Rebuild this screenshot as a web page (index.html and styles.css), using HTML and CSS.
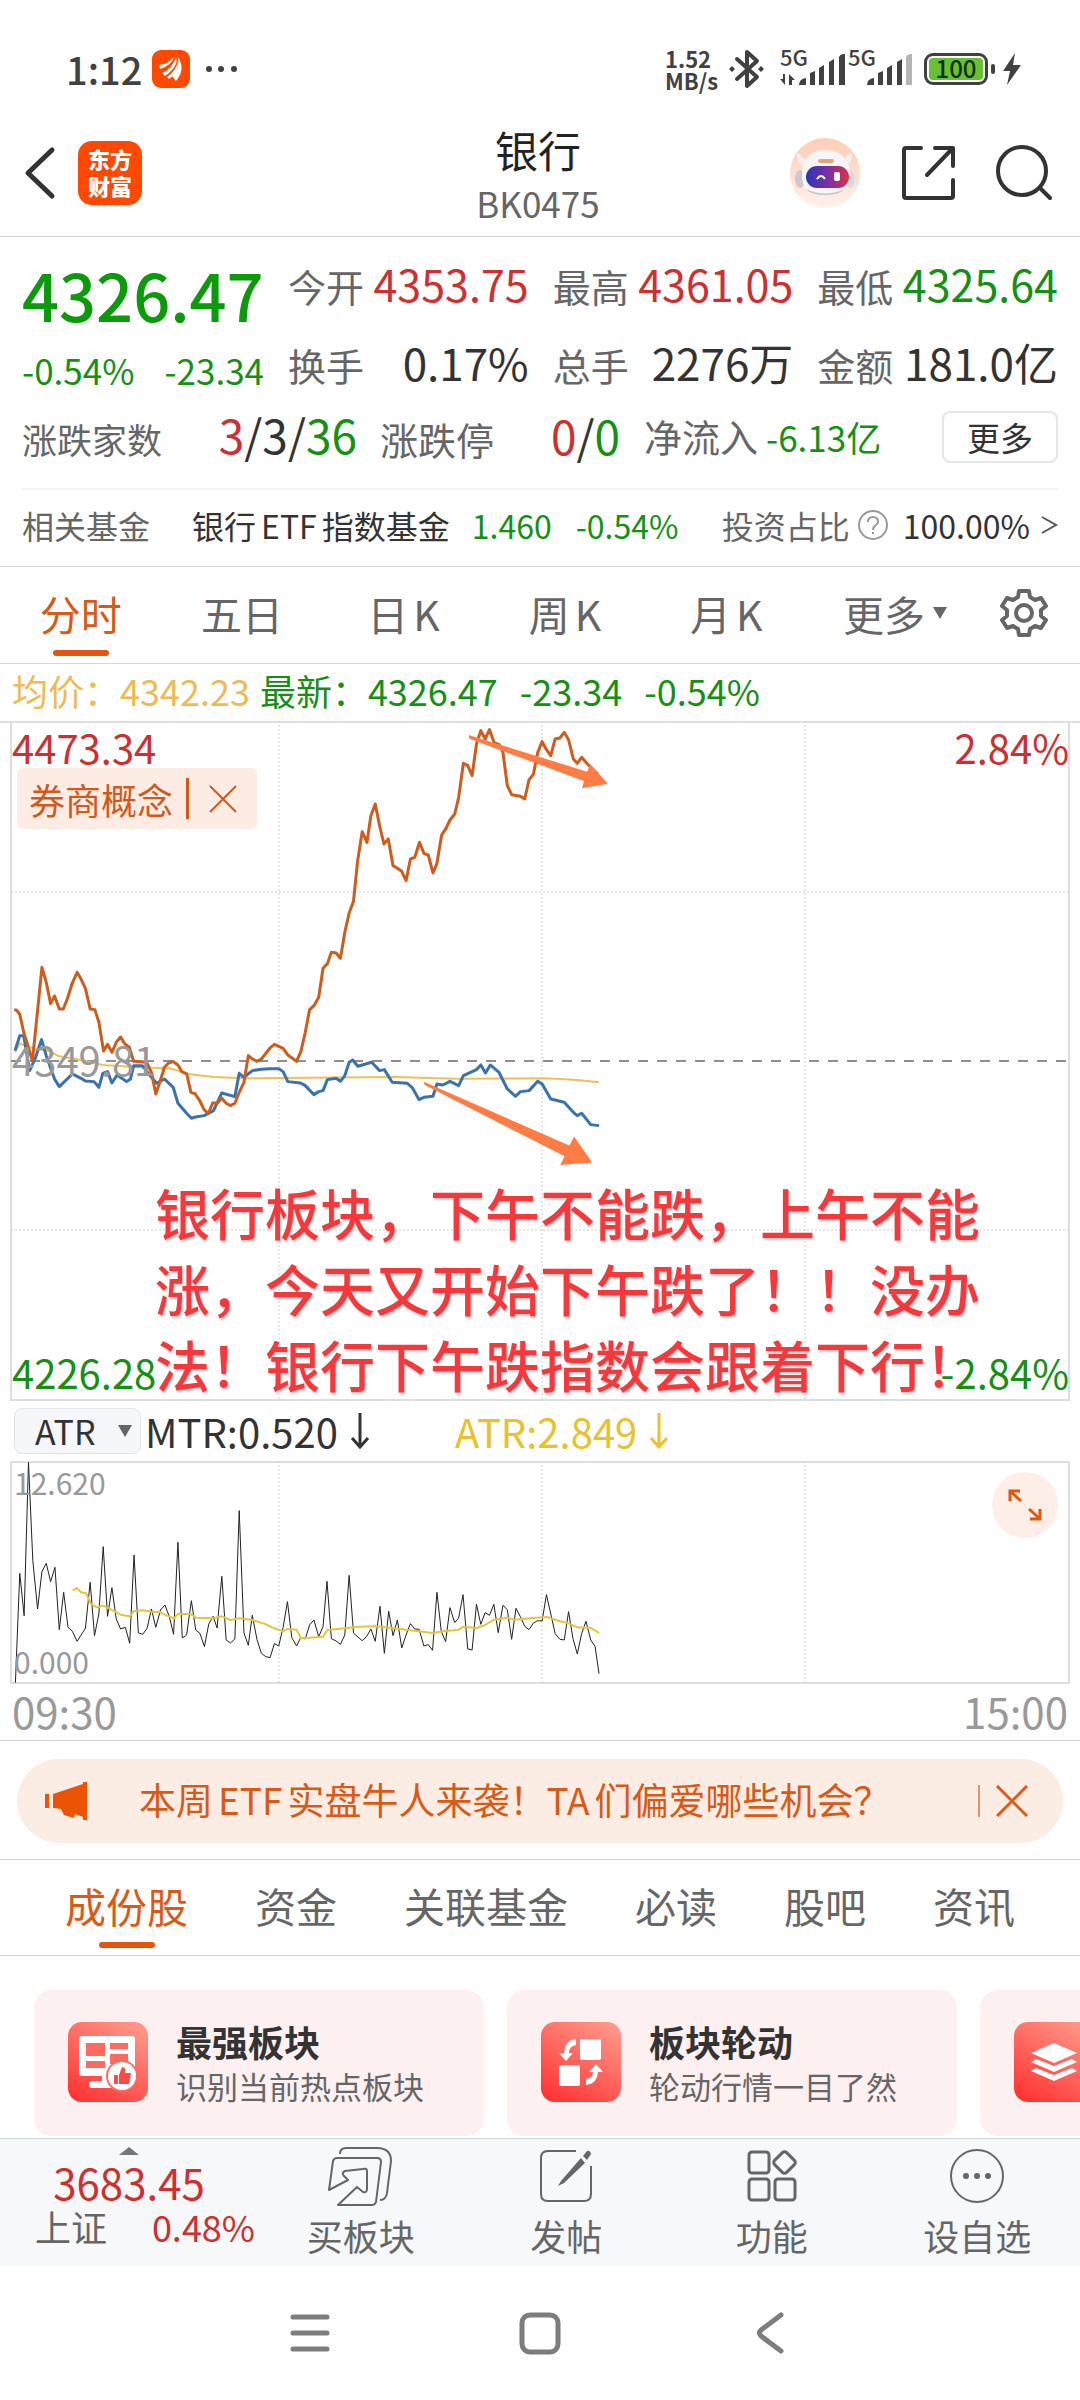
FILE: index.html
```html
<!DOCTYPE html>
<html lang="zh-CN">
<head>
<meta charset="utf-8">
<meta name="viewport" content="width=device-width, initial-scale=1">
<title>银行 BK0475</title>
<link rel="stylesheet" href="styles.css">
</head>
<body>
<div class="statusbar">
  <span class="clock">1:12</span>
  <svg class="notif" width="38" height="38" viewBox="0 0 38 38"><rect width="38" height="38" rx="9" fill="#ff4800"/><path d="M7 15q9-1 15-8-2 8-14 12zM10 23q10-4 14-16 3 9-11 19zM20 26q8-8 6-19 8 12-2 24zM15 27q9-6 11-16 0 12-9 18z" fill="#fff"/></svg>
  <svg width="34" height="10" viewBox="0 0 34 10" fill="#414141"><circle cx="5" cy="5" r="3"/><circle cx="17" cy="5" r="3"/><circle cx="30" cy="5" r="3"/></svg>
  <span class="spacer"></span>
  <span class="speed">1.52<br>MB/s</span>
  <svg class="bt" width="38" height="40" viewBox="0 0 38 40" fill="none" stroke="#414141" stroke-width="4" stroke-linejoin="round" stroke-linecap="round"><path d="M9 10l20 18-10 9V3l10 9L9 30"/><path d="M4 17l3 3-3 3-3-3zM33 17l3 3-3 3-3-3z" fill="#414141" stroke="none"/></svg>
  <span class="sim"><span class="net">5G</span>
    <svg width="66" height="32" viewBox="0 0 66 32" fill="#414141"><path d="M5 20v11l-5-6h3v-5zM9 31V20l6 6h-3v5zM19 31q0-6 7-7v7zM30 19l5-2v14h-5zM39 14l5-3v20h-5zM49 8l5-3v26h-5zM59 4q0-4 6-4v31h-6z"/></svg></span>
  <span class="sim"><span class="net">5G</span>
    <svg width="66" height="32" viewBox="0 0 66 32" fill="#414141"><path d="M19 31q0-6 7-7v7zM30 19l5-2v14h-5zM39 14l5-3v20h-5zM49 8l5-3v26h-5z"/><path d="M58 4q0-4 6-4v31h-6z" fill="#b5b5b5"/></svg></span>
  <span class="battery"><span class="cell">100</span></span>
  <svg width="20" height="32" viewBox="0 0 20 32" fill="#414141"><path d="M13 0L1 18h7L5 32l14-20h-8z"/></svg>
</div>

<header class="appbar">
  <div class="side">
    <button class="icon" aria-label="返回"><svg width="32" height="54" viewBox="0 0 32 54" fill="none" stroke="#333" stroke-width="5" stroke-linecap="round" stroke-linejoin="round"><path d="M28 4L4 27l24 23"/></svg></button>
    <a class="brand" href="#">东方<br>财富</a>
  </div>
  <div class="heading"><h1>银行</h1><p>BK0475</p></div>
  <div class="side tools">
    <button class="icon" aria-label="助手"><svg width="70" height="70" viewBox="0 0 70 70"><defs><linearGradient id="halo" x2="0" y2="1"><stop stop-color="#fdcdb5"/><stop offset="1" stop-color="#fff1ea"/></linearGradient><linearGradient id="visor"><stop stop-color="#2b35b5"/><stop offset=".5" stop-color="#7a2fa6"/><stop offset="1" stop-color="#dc3140"/></linearGradient></defs><circle cx="35" cy="35" r="35" fill="url(#halo)"/><path d="M10 16q-4-2-3 3 1 8 8 9l4-6q-7 0-9-6zM58 16q5-2 4 3-2 8-8 9l-5-6q7 0 9-6z" fill="#f4eff0"/><ellipse cx="10" cy="41" rx="5" ry="9" fill="#cfc9cf"/><ellipse cx="60" cy="41" rx="5" ry="9" fill="#ddd8dc"/><path d="M35 12c17 0 25 11 25 25 0 13-8 20-25 20S12 50 12 37c0-14 7-25 23-25z" fill="#f7f5f7"/><path d="M16 51q19 9 39 0-6 6-20 6t-19-6z" fill="#c7c4ca"/><rect x="28" y="21" width="16" height="4" rx="2" fill="#e0a878"/><rect x="16" y="28" width="43" height="22" rx="11" fill="url(#visor)"/><path d="M27 41q4-6 8 0" fill="none" stroke="#fff" stroke-width="2"/><rect x="44" y="34" width="6" height="9" rx="2" fill="#fff"/></svg></button>
    <button class="icon" aria-label="分享"><svg width="54" height="56" viewBox="0 0 54 56" fill="none" stroke="#333" stroke-width="4" stroke-linecap="round" stroke-linejoin="round"><path d="M20 3H5q-2 0-2 2v46q0 2 2 2h45q2 0 2-2V35M34 3h18v18M51 4L26 30"/></svg></button>
    <button class="icon" aria-label="搜索"><svg width="56" height="56" viewBox="0 0 56 56" fill="none" stroke="#333" stroke-width="4" stroke-linecap="round"><circle cx="26" cy="26" r="24"/><path d="M44 43l10 10"/></svg></button>
  </div>
</header>

<section class="quote">
  <div class="stats">
    <div class="price down"><strong>4326.47</strong><p><span>-0.54%</span><span>-23.34</span></p></div>
    <dl class="figures">
      <div><dt>今开</dt><dd class="up">4353.75</dd></div>
      <div><dt>最高</dt><dd class="up">4361.05</dd></div>
      <div><dt>最低</dt><dd class="down">4325.64</dd></div>
      <div class="big"><dt>换手</dt><dd>0.17%</dd></div>
      <div class="big"><dt>总手</dt><dd>2276万</dd></div>
      <div class="big"><dt>金额</dt><dd>181.0亿</dd></div>
    </dl>
  </div>
  <div class="breadth">
    <div class="pair wide"><span class="small">涨跌家数</span><b><i class="up">3</i>/3/<i class="down">36</i></b></div>
    <div class="pair mid"><span>涨跌停</span><b><i class="up">0</i>/<i class="down">0</i></b></div>
    <div class="flow"><span>净流入</span><em class="down">-6.13亿</em></div>
    <button class="more">更多</button>
  </div>
  <a class="fund" href="#">
    <span class="muted">相关基金</span><span class="name">银行<span class="latin">ETF</span>指数基金</span><span class="down">1.460</span><span class="down chg">-0.54%</span>
    <span class="muted ratio">投资占比</span>
    <svg width="32" height="32" viewBox="0 0 32 32" fill="none" stroke="#999" stroke-width="2"><circle cx="16" cy="16" r="14"/><path d="M11 13q0-5 5-5t5 5q0 2-3 4-2 1-2 4M16 23v2"/></svg>
    <span class="pct">100.00%</span>
    <svg width="18" height="20" viewBox="0 0 18 20" fill="none" stroke="#555" stroke-width="2"><path d="M2 2l14 8-14 8"/></svg>
  </a>
</section>

<nav class="periods">
  <button class="on">分时</button><button>五日</button><button>日<span class="latin">K</span></button><button>周<span class="latin">K</span></button><button>月<span class="latin">K</span></button>
  <button class="drop">更多<svg width="14" height="12" viewBox="0 0 14 12" fill="#666"><path d="M0 0h14L7 12z"/></svg></button>
  <button class="icon" aria-label="设置"><svg width="48" height="50" viewBox="0 0 48 50" fill="none" stroke="#666" stroke-width="4" stroke-linejoin="round"><path d="M19 3h10l1 6 5 3 6-2 5 8-5 4v6l5 4-5 8-6-2-5 3-1 6H19l-1-6-5-3-6 2-5-8 5-4v-6l-5-4 5-8 6 2 5-3z"/><circle cx="24" cy="25" r="8"/></svg></button>
</nav>

<p class="ticker"><span class="avg">均价：4342.23</span><span class="down">最新：4326.47</span><span class="down">-23.34</span><span class="down">-0.54%</span></p>

<section class="chart main">
  <svg viewBox="0 0 1080 680">
    <g fill="none" stroke="#dedede" stroke-width="2"><path d="M0 1h1080"/><path d="M11 0v679h1058V0"/><path d="M279 0v679M542 0v679M805 0v679M11 171h1058M11 509h1058" stroke="#cfcfcf" stroke-width="1" stroke-dasharray="2 2"/></g>
    <path d="M11 340h1058" stroke="#8f8f8f" stroke-width="2" stroke-dasharray="10 9"/>
    <g class="plot" transform="matrix(.3954 0 0 .3333 0 -22)">
      <polyline class="average" points="38,1060 50,1033 62,1040 90,1050 120,1055 150,1072 205,1083 260,1098 350,1105 430,1108 480,1126 540,1134 620,1138 780,1136 1000,1134 1150,1139 1380,1138 1460,1143 1515,1150"/>
      <polyline stroke="#3a72ae" points="38,1055 50,1010 60,1010 75,1115 90,1075 105,1022 117,1070 138,1140 150,1163 183,1125 205,1138 216,1146 238,1148 250,1165 260,1123 272,1118 283,1152 296,1128 320,1148 330,1140 338,1100 360,1100 383,1135 396,1153 416,1140 438,1165 450,1213 472,1243 484,1258 494,1254 516,1250 540,1235 561,1182 594,1193 605,1123 617,1135 638,1115 661,1111 683,1109 705,1109 716,1118 728,1148 760,1152 772,1160 794,1187 806,1178 817,1175 828,1142 850,1138 861,1147 872,1130 883,1090 892,1083 905,1102 940,1090 960,1115 972,1112 992,1150 1030,1153 1042,1165 1060,1202 1072,1195 1095,1192 1105,1155 1120,1158 1138,1147 1160,1160 1172,1130 1205,1112 1216,1098 1228,1122 1240,1098 1262,1120 1283,1170 1304,1192 1316,1178 1338,1175 1360,1147 1371,1155 1393,1200 1427,1210 1450,1240 1460,1250 1471,1243 1494,1277 1515,1280"/>
      <polyline stroke="#ce5c1c" points="36,932 42,934 50,946 60,1000 82,1085 95,935 106,805 117,850 128,914 138,891 150,930 160,930 170,900 182,855 195,820 204,838 216,868 228,930 240,932 250,970 262,1056 272,1036 283,1060 294,1030 305,1014 316,1035 327,1045 338,1087 360,1088 372,1093 383,1120 394,1185 404,1150 416,1105 426,1092 438,1088 450,1098 460,1118 472,1125 483,1180 494,1185 505,1205 516,1232 527,1243 538,1212 550,1212 561,1198 572,1213 583,1220 594,1213 605,1180 617,1150 628,1070 638,1080 650,1087 661,1080 683,1047 694,1036 716,1048 728,1068 750,1087 761,1057 772,1000 783,932 794,920 806,895 817,808 828,794 838,760 850,762 861,778 872,700 883,642 894,607 904,490 916,398 928,430 938,350 949,315 960,380 971,435 982,420 994,500 1005,508 1016,517 1027,545 1038,480 1049,475 1061,430 1072,463 1083,468 1095,522 1105,493 1117,408 1128,388 1138,363 1150,345 1160,295 1172,193 1183,200 1194,230 1205,135 1216,95 1227,120 1238,92 1250,132 1262,136 1272,160 1283,260 1294,287 1316,292 1327,300 1338,242 1349,226 1360,160 1371,128 1382,152 1393,170 1404,120 1416,117 1427,100 1438,122 1450,180 1460,193 1471,175 1482,190 1494,205 1512,225"/>
      <path fill="#ff7d45" d="M1185 108L1485 218 1493 196 1537 254 1472 268 1477 246 1187 119zM1072 1148L1440 1340 1452 1313 1498 1391 1417 1398 1428 1372 1074 1158z"/>
    </g>
  </svg>
  <span class="tag hi up">4473.34</span><span class="tag hi right up">2.84%</span>
  <span class="tag midline">4349.81</span>
  <span class="tag lo down">4226.28</span><span class="tag lo right down">-2.84%</span>
  <div class="compare"><span>券商概念</span><button aria-label="移除券商概念"><svg width="28" height="28" viewBox="0 0 28 28" stroke="#d05a1c" stroke-width="2"><path d="M1 1l26 26M27 1L1 27"/></svg></button></div>
  <p class="note">银行板块，下午不能跌，上午不能<br>涨，今天又开始下午跌了！！没办<br>法！银行下午跌指数会跟着下行！</p>
</section>

<div class="indicator">
  <label class="picker"><select aria-label="指标"><option>ATR</option></select><svg width="14" height="12" viewBox="0 0 14 12" fill="#666"><path d="M0 0h14L7 12z"/></svg></label>
  <span class="mtr">MTR:0.520<svg width="20" height="36" viewBox="0 0 20 36" fill="none" stroke="currentColor" stroke-width="3"><path d="M10 0v33M2 25l8 9 8-9"/></svg></span>
  <span class="atr">ATR:2.849<svg width="20" height="36" viewBox="0 0 20 36" fill="none" stroke="currentColor" stroke-width="3"><path d="M10 0v33M2 25l8 9 8-9"/></svg></span>
</div>

<section class="chart sub">
  <svg viewBox="0 0 1080 224">
    <g fill="none" stroke="#dedede" stroke-width="2"><path d="M11 1h1058v221H11z"/><path d="M279 0v222M542 0v222M805 0v222" stroke="#cfcfcf" stroke-width="1" stroke-dasharray="2 2"/></g>
    <g class="plot thin" transform="matrix(.3954 0 0 .3333 0 -82)">
      <polyline stroke="#222" points="39,911 50,583 61,710 72,250 83,545 95,690 106,578 117,553 128,608 139,565 150,752 161,640 172,745 183,757 195,787 216,748 228,610 239,770 250,705 261,503 272,712 283,626 294,720 305,750 317,745 328,793 339,528 350,762 361,766 372,748 383,690 394,745 406,693 417,678 428,712 439,766 450,490 461,777 472,768 484,665 495,753 506,764 517,803 528,735 539,712 549,747 561,592 572,783 583,792 594,780 605,395 617,762 628,799 638,709 650,782 661,823 672,833 683,836 694,794 705,801 716,745 727,668 738,776 750,801 761,775 772,780 783,738 794,723 806,773 817,743 827,607 838,779 850,786 861,796 872,768 883,589 894,762 905,774 916,785 927,773 938,750 949,787 961,682 972,823 983,697 994,770 1005,723 1016,807 1027,768 1038,734 1049,750 1060,751 1072,801 1083,797 1094,814 1105,640 1116,757 1127,788 1138,686 1150,731 1160,717 1171,647 1183,810 1194,813 1205,676 1216,736 1227,701 1238,709 1249,676 1260,761 1272,679 1283,692 1294,781 1305,688 1316,713 1327,742 1338,752 1349,732 1360,725 1371,726 1382,647 1393,705 1404,764 1416,781 1427,783 1438,698 1449,778 1460,825 1471,764 1482,727 1494,783 1505,802 1515,884"/>
      <polyline class="average" points="184,635 194,627 205,640 218,643 230,675 245,685 261,680 283,693 305,707 328,712 338,697 360,694 383,698 406,700 428,713 440,718 450,705 483,705 495,716 540,718 561,712 583,723 605,718 638,723 670,735 694,748 716,757 727,750 750,752 761,777 783,776 817,773 828,753 861,749 905,743 950,742 1000,748 1030,753 1060,757 1094,762 1127,756 1160,752 1171,743 1205,747 1227,738 1250,722 1283,716 1300,722 1340,718 1383,714 1416,727 1438,733 1460,745 1494,747 1515,762"/>
    </g>
  </svg>
  <span class="scale top">12.620</span><span class="scale bottom">0.000</span>
  <button class="expand" aria-label="全屏"><svg width="36" height="34" viewBox="0 0 36 34" fill="none" stroke="#e2560f" stroke-width="3"><path d="M3 13V3h10M3 3l11 10M33 21v10H23M33 31L22 21"/></svg></button>
</section>
<div class="times"><span>09:30</span><span>15:00</span></div>

<aside class="promo">
  <svg width="44" height="38" viewBox="0 0 44 38" fill="#ea5404"><path d="M0 12h4v14H0zM8 12L38 2V0h4v38h-4v-3l-8-3-1 4-10-3-3-6-8-1z"/></svg>
  <a href="#">本周<span class="latin">ETF</span>实盘牛人来袭！<span class="latin first">TA</span>们偏爱哪些机会？</a>
  <button class="icon" aria-label="关闭"><svg width="32" height="32" viewBox="0 0 32 32" stroke="#dd5a18" stroke-width="3"><path d="M1 1l30 30M31 1L1 31"/></svg></button>
</aside>

<nav class="sections"><button class="on">成份股</button><button>资金</button><button>关联基金</button><button>必读</button><button>股吧</button><button>资讯</button></nav>

<section class="cards">
  <a class="card" href="#"><svg width="80" height="80" viewBox="0 0 80 80"><defs><linearGradient id="red" x1=".2" y1="1" x2=".8" y2="0"><stop stop-color="#ff3535"/><stop offset="1" stop-color="#ff9788"/></linearGradient></defs><rect width="80" height="80" rx="14" fill="url(#red)"/><rect x="11" y="14" width="56" height="40" rx="3" fill="#fff"/><path d="M18 21h19v13H18zM42 21h18v6H42zM42 32h18v10H42zM18 39h19v7H18z" fill="#ff6a60"/><path d="M34 54h8v6h-8z" fill="#fff"/><rect x="21" y="59" width="36" height="7" rx="3" fill="#fff"/><circle cx="54" cy="54" r="16" fill="#ff6a60"/><circle cx="54" cy="54" r="14" fill="#fff"/><path d="M46 53h4v9h-4zM51 53l3-8q4 0 3 6h6l-2 11H51z" fill="#ff4b45"/></svg><span><strong>最强板块</strong><small>识别当前热点板块</small></span></a>
  <a class="card" href="#"><svg width="80" height="80" viewBox="0 0 80 80"><rect width="80" height="80" rx="14" fill="url(#red)"/><rect x="39" y="17" width="21" height="21" rx="2" fill="#fff"/><rect x="18" y="43" width="21" height="21" rx="2" fill="#fff"/><path d="M35 17v6q-7 1-7 8h4l-7 8-7-8h5q1-13 12-14zM45 63v-6q7-1 7-7h-4l7-8 7 8h-5q-1 12-12 13z" fill="#fff"/></svg><span><strong>板块轮动</strong><small>轮动行情一目了然</small></span></a>
  <a class="card" href="#" aria-label="更多板块工具"><svg width="80" height="80" viewBox="0 0 80 80"><rect width="80" height="80" rx="14" fill="url(#red)"/><path d="M40 21l23 10-23 10-23-10z" fill="#fff"/><path d="M17 40l5-3 18 7 18-7 5 3-23 10zM17 49l5-3 18 7 18-7 5 3-23 10z" fill="#fff"/></svg></a>
</section>

<footer class="dock">
  <a class="index up" href="#">
    <svg width="20" height="8" viewBox="0 0 20 8" fill="#777"><path d="M0 8L10 0l10 8z"/></svg>
    <b>3683.45</b><span class="pairline"><i>上证</i><em>0.48%</em></span>
  </a>
  <a href="#"><svg width="66" height="62" viewBox="0 0 66 62" fill="none" stroke="#666" stroke-width="2" stroke-linejoin="round"><path d="M12 9q0-6 6-6h31q14 0 14 13l-4 32q-1 7-7 7"/><path d="M1 45l4-29q1-3 4-3h40q4 0 4 4l-5 40q-1 3-4 3H10l19-18 6 5q4 1 4-3V26q0-3-4-2l-18 2q-4 2-1 5l4 4z"/></svg>买板块</a>
  <a href="#"><svg width="56" height="62" viewBox="0 0 56 62" fill="none" stroke="#666" stroke-width="2"><path d="M38 6H10q-7 0-7 7v36q0 7 7 7h36q7 0 7-7V21"/><path d="M23 36L43 13l4 5-21 20-6 3zM45 11l4-5q3-1 4 3l-4 6z" fill="#666" stroke="none"/></svg>发帖</a>
  <a href="#"><svg width="52" height="62" viewBox="0 0 52 62" fill="none" stroke="#666" stroke-width="3"><rect x="3" y="7" width="20" height="21" rx="3"/><rect x="3" y="34" width="20" height="21" rx="3"/><rect x="29" y="34" width="20" height="21" rx="3"/><rect x="30" y="9" width="17" height="17" rx="3" transform="rotate(45 38.500 17.500)"/></svg>功能</a>
  <a href="#"><svg width="56" height="62" viewBox="0 0 56 62" fill="none" stroke="#666" stroke-width="2"><circle cx="28" cy="31" r="26"/><g fill="#666" stroke="none"><circle cx="17" cy="31" r="3"/><circle cx="28" cy="31" r="3"/><circle cx="39" cy="31" r="3"/></g></svg>设自选</a>
</footer>

<nav class="system">
  <button class="icon" aria-label="菜单"><svg width="42" height="44" viewBox="0 0 42 44" stroke="#7d7d7d" stroke-width="5" stroke-linecap="round"><path d="M4 6h34M4 22h34M4 38h34"/></svg></button>
  <button class="icon" aria-label="主页"><svg width="42" height="44" viewBox="0 0 42 44" fill="none" stroke="#7d7d7d" stroke-width="5"><rect x="3" y="4" width="36" height="37" rx="8"/></svg></button>
  <button class="icon" aria-label="后退"><svg width="42" height="44" viewBox="0 0 42 44" fill="none" stroke="#7d7d7d" stroke-width="5" stroke-linecap="round" stroke-linejoin="round"><path d="M32 4L12 19q-3 3 0 6l20 15"/></svg></button>
</nav>
</body>
</html>
```
FILE: styles.css
```css
* { box-sizing: border-box; }
body, h1, p, dl, dd { margin: 0; }
body {
  background: #fff;
  color: #333;
  font-family: "Noto Sans CJK SC", "Noto Sans", sans-serif;
  font-size: 36px;
}
svg { display: block; flex: none; }
a { color: inherit; text-decoration: none; }
i, em { font-style: normal; }
button, select { font: inherit; color: inherit; background: none; border: 0; padding: 0; }
.icon { display: flex; }
.up { color: #cc3030; }
.down { color: #159015; }
.latin { margin: 0 5px; }
.latin.first { margin-left: 0; }

/* phone status bar */
.statusbar { display: flex; align-items: center; height: 102px; padding: 36px 58px 0 66px; color: #414141; }
.clock { width: 86px; font-size: 38px; line-height: 60px; font-weight: 500; }
.notif { margin-right: 14px; }
.spacer { flex: 1; }
.speed { font-size: 22px; line-height: 22px; font-weight: 700; width: 63px; }
.bt { margin-right: 14px; }
.sim { position: relative; display: flex; width: 68px; padding-top: 2px; }
.net { position: absolute; left: 0; top: -8px; font-size: 22px; line-height: 24px; font-weight: 500; }
.battery { display: flex; position: relative; width: 64px; height: 32px; border: 3px solid #414141; border-radius: 9px; padding: 2px; margin: 0 14px 0 8px; }
.battery::after { content: ""; position: absolute; right: -10px; top: 8px; width: 4px; height: 10px; border-radius: 2px; background: #414141; }
.cell { flex: 1; background: #67c132; border-radius: 4px; color: #12300a; font-size: 24px; line-height: 20px; text-align: center; font-weight: 500; }

/* title bar */
.appbar { display: grid; grid-template-columns: 1fr auto 1fr; align-items: center; height: 135px; padding: 8px 28px 0 24px; border-bottom: 1px solid #d6d6d6; }
.side { display: flex; align-items: center; gap: 22px; }
.tools { justify-content: flex-end; gap: 41px; }
.brand { width: 64px; height: 64px; border-radius: 14px; background: #ff4800; color: #fff; font-size: 22px; line-height: 27px; font-weight: 900; text-align: center; padding-top: 4px; }
.heading { text-align: center; }
h1 { font-size: 43px; line-height: 60px; font-weight: 400; color: #222; }
.heading p { font-size: 35px; line-height: 48px; color: #666; }

/* quote */
.quote { border-bottom: 1px solid #d6d6d6; padding: 8px 22px 0; }
.stats { display: flex; gap: 24px; }
.price { width: 242px; }
.price strong { display: block; font-size: 65px; line-height: 98px; font-weight: 500; color: #0a9a0a; }
.price p { display: flex; justify-content: space-between; font-size: 35px; line-height: 54px; }
.figures { flex: 1; display: grid; grid-template-columns: repeat(3, 1fr); column-gap: 24px; line-height: 76px; }
.figures > div { display: flex; justify-content: space-between; align-items: baseline; font-size: 43px; }
.figures > .big { font-size: 44px; }
dt, .breadth span { font-size: 38px; color: #666; }
.breadth { display: flex; align-items: center; height: 87px; padding-bottom: 18px; border-bottom: 2px solid #f4f4f4; line-height: 76px; }
.breadth .small { font-size: 35px; }
.breadth b { font-weight: 400; font-size: 46px; }
.pair { display: flex; justify-content: space-between; align-items: baseline; }
.wide { width: 335px; margin-right: 23px; }
.mid { width: 240px; margin-right: 24px; }
.flow { display: flex; gap: 8px; align-items: baseline; }
.flow em { font-size: 35px; }
.more { margin-left: auto; width: 116px; height: 52px; border: 2px solid #e6e6e6; border-radius: 8px; font-size: 33px; line-height: 46px; }
.fund { display: flex; align-items: center; height: 76px; padding-bottom: 6px; font-size: 32px; line-height: 70px; }
.muted { color: #666; }
.name { margin: 0 22px 0 42px; }
.chg { margin-left: 24px; }
.ratio { margin-left: auto; margin-right: 7px; }
.pct { margin: 0 10px 0 14px; }

/* period tabs */
.periods { display: grid; grid-template-columns: repeat(5, 2fr) 240px; align-items: center; height: 97px; padding: 0 32px 4px 0; border-bottom: 1px solid #d6d6d6; font-size: 41px; line-height: 91px; color: #666; }
.periods { grid-template-columns: repeat(5, 1fr) 193px 48px; }
.periods .latin { margin-right: 0; }
.drop { display: flex; align-items: center; gap: 8px; padding-left: 36px; }
.on { position: relative; color: #d85a16; }
.on::after { content: ""; position: absolute; left: 50%; bottom: 3px; width: 56px; height: 6px; margin-left: -28px; border-radius: 3px; background: #e2560f; }
.ticker { display: flex; padding: 0 12px 4px; gap: 22px; font-size: 36px; line-height: 53px; }
.avg { color: #ecbb55; margin-right: -12px; }

/* charts */
.chart { position: relative; }
.chart > svg { width: 100%; height: auto; }
.plot polyline { fill: none; stroke-width: 3; vector-effect: non-scaling-stroke; stroke-linejoin: round; }
.plot .average { stroke: #eac25a; stroke-width: 2; }
.plot.thin polyline { stroke-width: 1; }
.plot.thin .average { stroke: #e3c640; stroke-width: 2; }
.tag { position: absolute; left: 12px; font-size: 40px; line-height: 48px; }
.right { left: auto; right: 11px; }
.hi { top: 2px; }
.midline { top: 50%; margin-top: -26px; color: #999; }
.lo { bottom: 5px; }
.compare { position: absolute; left: 17px; top: 47px; display: flex; align-items: center; height: 61px; padding: 0 20px 0 12px; background: #fdece4; border-radius: 6px; color: #d05a1c; line-height: 60px; }
.compare button { border-left: 3px solid #d05a1c; height: 41px; margin-left: 13px; padding-left: 20px; }
.note { position: absolute; left: 155px; bottom: 0; font-size: 55px; line-height: 76px; color: #f5383c; font-weight: 500; white-space: nowrap; text-shadow: 1px 2px 2px #ccc; }
.indicator { display: flex; align-items: center; height: 60px; padding-left: 14px; font-size: 40px; line-height: 58px; }
.picker { position: relative; display: flex; align-items: center; width: 127px; height: 46px; background: #f6f7fa; border: 1px solid #e3e5e8; border-radius: 8px; padding: 0 8px 0 20px; }
.picker select { appearance: none; flex: 1; font-size: 34px; line-height: 44px; }
.mtr, .atr { display: flex; align-items: center; gap: 12px; margin-left: 4px; }
.mtr { width: 306px; }
.atr { color: #e6c22e; }
.scale { position: absolute; left: 14px; font-size: 30px; line-height: 40px; color: #999; }
.top { top: 1px; }
.bottom { bottom: 4px; }
.expand { position: absolute; right: 22px; top: 11px; display: grid; place-items: center; width: 66px; height: 66px; border-radius: 50%; background: #fdefe7; }
.times { display: flex; justify-content: space-between; padding: 0 12px 3px; border-bottom: 1px solid #d6d6d6; font-size: 42px; line-height: 52px; color: #999; }

/* promo strip */
.promo { display: flex; align-items: center; height: 84px; margin: 18px 17px 16px; padding: 0 35px 0 28px; border-radius: 42px; background: #fcede4; color: #d85a16; }
.promo a { flex: 1; margin-left: 50px; padding-bottom: 4px; font-size: 37px; line-height: 76px; }
.promo .icon { border-left: 2px solid #e09468; padding-left: 16px; }

/* content tabs */
.sections { display: flex; justify-content: space-between; padding: 0 65px 4px; border-top: 1px solid #d6d6d6; border-bottom: 1px solid #d6d6d6; font-size: 41px; line-height: 91px; color: #666; }
.cards { display: flex; gap: 23px; padding: 34px 0 2px 34px; overflow: hidden; }
.card { flex: none; display: flex; align-items: center; width: 450px; height: 146px; padding: 0 34px 2px; border-radius: 18px; background: #fdf0f0; gap: 28px; }
.card strong, .card small { display: block; }
.card strong { font-weight: 700; font-size: 36px; line-height: 48px; }
.card small { font-size: 31px; line-height: 42px; color: #666; }

/* bottom dock */
.dock { display: grid; grid-template-columns: 258px repeat(4, 1fr); height: 128px; background: #f7f8fa; border-top: 1px solid #cfd6d7; color: #666; line-height: 50px; text-align: center; }
.dock a { display: flex; flex-direction: column; align-items: center; gap: 3px; padding-top: 6px; }
.dock .index { line-height: 45px; gap: 0; padding-top: 8px; }
.index b { font-weight: 400; font-size: 42px; padding-top: 4px; }
.pairline { display: flex; justify-content: space-between; align-self: stretch; padding: 0 3px 0 35px; }
.pairline i { color: #666; }
.system { display: flex; justify-content: center; gap: 188px; padding: 45px 0; }
```
